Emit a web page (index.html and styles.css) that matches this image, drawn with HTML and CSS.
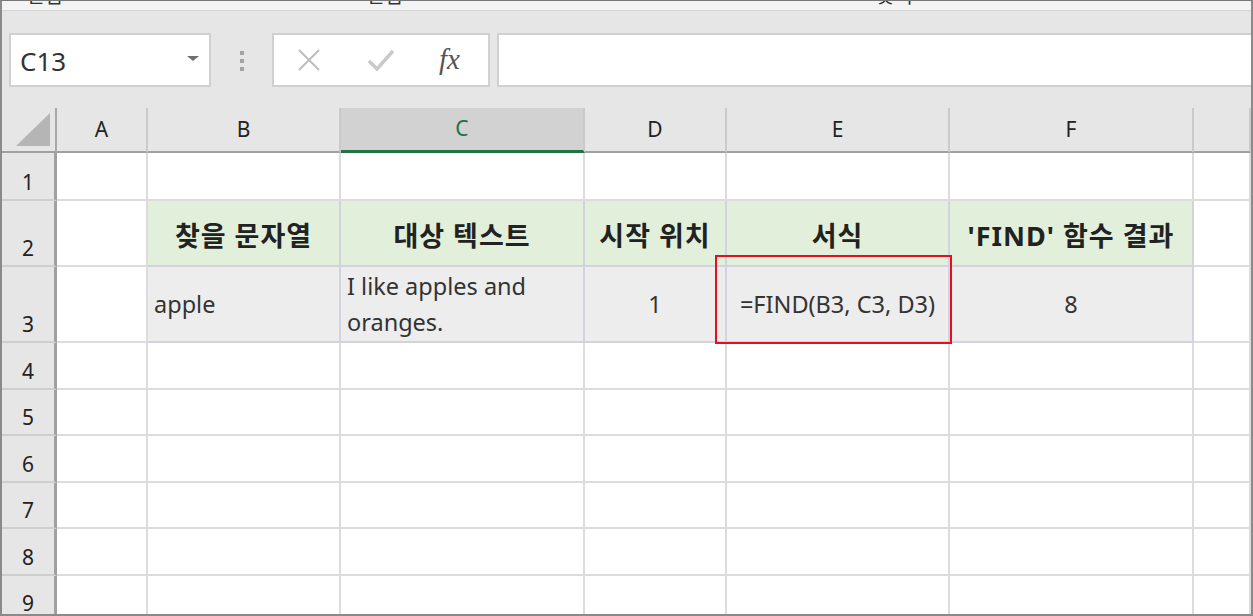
FILE: index.html
```html
<!DOCTYPE html>
<html lang="ko">
<head>
  <meta charset="UTF-8">
  <title>FIND 함수</title>
  <link rel="stylesheet" href="styles.css">
</head>
<body>
  <div class="frame">
    <div class="ribbon">
      <span class="rb-1">편집</span><span class="rb-mark m1"></span>
      <span class="rb-2">편집</span><span class="rb-mark m2"></span>
      <span class="rb-3">찾기</span><span class="rb-mark m3"></span>
    </div>

    <div class="fbar">
      <div class="namebox">
        <span>C13</span>
        <span class="caret"></span>
      </div>
      <div class="grip"><i></i><i></i><i></i></div>
      <div class="fbuttons">
        <svg class="ico-x" width="24" height="22" viewBox="0 0 24 22"><path d="M2 1 L22 21 M22 1 L2 21" stroke="#bdbdbd" stroke-width="2" fill="none"/></svg>
        <svg class="ico-ok" width="28" height="22" viewBox="0 0 28 22"><path d="M2 12 L10 20 L26 2" stroke="#c9c9c9" stroke-width="3.5" fill="none"/></svg>
        <span class="fx">fx</span>
      </div>
      <div class="finput"></div>
    </div>

    <div class="sheet">
      <div class="corner"><svg width="36" height="34" viewBox="0 0 36 34"><polygon points="34,0 34,33 0,33" fill="#b5b5b5"/></svg></div>
      <div class="ch">A</div><div class="ch">B</div><div class="ch sel">C</div><div class="ch">D</div><div class="ch">E</div><div class="ch">F</div><div class="ch"></div>

      <div class="rh">1</div><div class="c"></div><div class="c"></div><div class="c"></div><div class="c"></div><div class="c"></div><div class="c"></div><div class="c"></div>

      <div class="rh">2</div><div class="c"></div>
      <div class="c tb head">찾을 문자열</div>
      <div class="c tb head">대상 텍스트</div>
      <div class="c tb head">시작 위치</div>
      <div class="c tb head">서식</div>
      <div class="c tb head">'FIND' 함수 결과</div>
      <div class="c"></div>

      <div class="rh">3</div><div class="c"></div>
      <div class="c tb val left">apple</div>
      <div class="c tb val left wrap">I like apples and<br>oranges.</div>
      <div class="c tb val">1</div>
      <div class="c tb val">=FIND(B3, C3, D3)</div>
      <div class="c tb val">8</div>
      <div class="c"></div>

      <div class="rh">4</div><div class="c"></div><div class="c"></div><div class="c"></div><div class="c"></div><div class="c"></div><div class="c"></div><div class="c"></div>
      <div class="rh">5</div><div class="c"></div><div class="c"></div><div class="c"></div><div class="c"></div><div class="c"></div><div class="c"></div><div class="c"></div>
      <div class="rh">6</div><div class="c"></div><div class="c"></div><div class="c"></div><div class="c"></div><div class="c"></div><div class="c"></div><div class="c"></div>
      <div class="rh">7</div><div class="c"></div><div class="c"></div><div class="c"></div><div class="c"></div><div class="c"></div><div class="c"></div><div class="c"></div>
      <div class="rh">8</div><div class="c"></div><div class="c"></div><div class="c"></div><div class="c"></div><div class="c"></div><div class="c"></div><div class="c"></div>
      <div class="rh">9</div><div class="c"></div><div class="c"></div><div class="c"></div><div class="c"></div><div class="c"></div><div class="c"></div><div class="c"></div>

      <div class="highlight"></div>
    </div>
  </div>
</body>
</html>
```

FILE: styles.css
```css
* { margin: 0; padding: 0; box-sizing: border-box; }
body {
  font-family: "Noto Sans", "Noto Sans CJK KR", sans-serif;
  background: #fff;
  color: #262626;
}

.frame {
  width: 1253px;
  height: 616px;
  border: 2px solid #8a8a8a;
  border-top: 1px solid #777;
  overflow: hidden;
  background: #e6e6e6;
}

/* ribbon remnant at the top */
.ribbon {
  position: relative;
  height: 10px;
  background: #f3f3f3;
  border-bottom: 1px solid #d6d6d6;
  overflow: hidden;
  font-size: 20px;
  line-height: 20px;
}
.ribbon span[class^="rb-"] { position: absolute; top: -15px; color: #333; }
.rb-1 { left: 24px; }
.rb-2 { left: 364px; }
.rb-3 { left: 874px; }
.rb-mark { position: absolute; top: 0; width: 6px; height: 3px; background: #999; }
.m1 { left: 134px; }
.m2 { left: 619px; }
.m3 { left: 1183px; }

/* formula bar */
.fbar {
  display: flex;
  align-items: center;
  height: 97px;
  padding: 22px 0 21px 7px;
}
.namebox {
  display: flex;
  align-items: center;
  justify-content: space-between;
  width: 202px;
  height: 54px;
  background: #fff;
  border: 2px solid #d0d0d0;
  padding: 2px 10px 0 9px;
  font-size: 26px;
  color: #333;
}
.caret {
  width: 0; height: 0;
  border-left: 6px solid transparent;
  border-right: 6px solid transparent;
  border-top: 5px solid #707070;
  margin-top: -6px;
}
.grip {
  display: flex;
  flex-direction: column;
  gap: 4px;
  width: 61px;
  align-items: center;
  padding-top: 2px;
}
.grip i { display: block; width: 4px; height: 4px; background: #a3a3a3; }
.fbuttons {
  display: flex;
  align-items: center;
  width: 218px;
  height: 54px;
  background: #fff;
  border: 2px solid #d0d0d0;
  padding-left: 23px;
}
.ico-x { margin-right: 46px; }
.ico-ok { margin-right: 44px; }
.fx {
  font-family: "Liberation Serif", serif;
  font-style: italic;
  font-size: 29px;
  color: #555;
  margin-top: -2px;
}
.finput {
  flex: 1;
  height: 54px;
  margin-left: 7px;
  background: #fff;
  border: 2px solid #d0d0d0;
  border-right: none;
}

/* sheet grid */
.sheet {
  position: relative;
  display: grid;
  grid-template-columns: 55px 91px 193px 244px 142px 223px 244px 1fr;
  grid-template-rows: 45px 48px 66px 76px 47px 46px 47px 46px 47px 46px;
  background: #fff;
}
.corner {
  display: flex;
  align-items: flex-end;
  justify-content: flex-end;
  padding: 0 3px 4px 0;
  background: #e6e6e6;
  border-right: 2px solid #a8a8a8;
  border-bottom: 2px solid #a0a0a0;
}
.ch {
  display: flex;
  align-items: center;
  justify-content: center;
  background: #e6e6e6;
  border-right: 2px solid #cacaca;
  border-bottom: 2px solid #a0a0a0;
  font-size: 21px;
  color: #222;
  padding-bottom: 2px;
}
.ch.sel {
  background: #d2d2d2;
  color: #217346;
  border-bottom: 3px solid #217346;
}
.rh {
  display: flex;
  align-items: flex-end;
  justify-content: center;
  background: #e6e6e6;
  border-right: 3px solid #a0a0a0;
  border-bottom: 2px solid #cecece;
  font-size: 21px;
  line-height: 1;
  color: #222;
  padding-bottom: 6px;
}
.c {
  border-right: 2px solid #dcdcdc;
  border-bottom: 2px solid #dcdcdc;
}
.tb { border-color: #d3d2e0; }
.head {
  display: flex;
  align-items: center;
  justify-content: center;
  background: #e2efda;
  font-family: "Noto Sans", "Noto Sans CJK KR", sans-serif;
  font-weight: bold;
  font-size: 27px;
  letter-spacing: 1px;
  color: #222;
  padding-top: 2px;
}
.val {
  display: flex;
  align-items: center;
  justify-content: center;
  background: #ededed;
  font-size: 23.5px;
  color: #333;
}
.val.left { justify-content: flex-start; padding-left: 6px; }
.val.wrap { line-height: 36px; }

/* red outline around the formula cell */
.highlight {
  position: absolute;
  left: 713px;
  top: 147px;
  width: 237px;
  height: 89px;
  border: 2px solid #e50f1e;
  pointer-events: none;
}
```
